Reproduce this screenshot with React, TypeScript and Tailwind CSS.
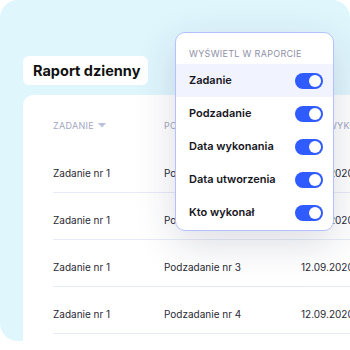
import React from "react";

const rows = [
  { task: "Zadanie nr 1", sub: "Podzadanie nr 1", date: "12.09.2020" },
  { task: "Zadanie nr 1", sub: "Podzadanie nr 2", date: "12.09.2020" },
  { task: "Zadanie nr 1", sub: "Podzadanie nr 3", date: "12.09.2020" },
  { task: "Zadanie nr 1", sub: "Podzadanie nr 4", date: "12.09.2020" },
];

const options = ["Zadanie", "Podzadanie", "Data wykonania", "Data utworzenia", "Kto wykonał"];

const Toggle = () => (
  <div className="w-[28px] h-[16px] rounded-full bg-[#2f5bff] flex items-center justify-end pr-[2px]">
    <div className="w-[12px] h-[12px] rounded-full bg-white" />
  </div>
);

const App = () => {
  return (
    <div
      className="w-[350px] h-[350px] bg-white relative overflow-hidden"
      style={{ fontFamily: "Inter, 'Noto Sans', sans-serif" }}
    >
      <div className="w-[350px] h-[341px] rounded-[18px] bg-[#e0f6fd] pt-[56px] pl-[23px]">
        <div className="w-[125px] h-[29px] rounded-[6px] bg-white flex items-center pl-[10px] text-[14.5px] font-bold text-[#111]">
          Raport dzienny
        </div>
        <div className="mt-[10px] h-[270px] w-[340px] bg-white rounded-tl-[10px] text-[10px] text-[#2a2a35]">
          <div className="h-[51px] pt-[10px] pl-[30px] flex items-center text-[9px] tracking-[0.3px] text-[#a3a6bf] whitespace-nowrap">
            <div className="w-[111px] shrink-0 flex items-center gap-[4px]">
              ZADANIE
              <svg width="8" height="5" viewBox="0 0 8 5">
                <path d="M0 0h8L4 4.5z" fill="#b9c0de" />
              </svg>
            </div>
            <div className="w-[137px] shrink-0">PODZADANIE</div>
            <div className="shrink-0">DATA WYKONANIA</div>
          </div>
          {rows.map((r, i) => (
            <div key={i} className="ml-[30px] h-[47px] pt-[8px] border-b border-[#e7ebf7] flex items-center whitespace-nowrap">
              <div className="w-[111px] shrink-0">{r.task}</div>
              <div className="w-[137px] shrink-0">{r.sub}</div>
              <div className="shrink-0">{r.date}</div>
            </div>
          ))}
        </div>
      </div>

      <div className="absolute left-[175px] top-[32px] w-[159px] h-[199px] bg-white rounded-[10px] border border-[#b3c2ff] shadow-[0_12px_40px_rgba(30,40,80,0.16)] overflow-hidden">
        <div className="h-[31px] pl-[13px] pt-[14px] text-[9px] tracking-[0.3px] text-[#8f90a8]">
          WYŚWIETL W RAPORCIE
        </div>
        {options.map((o, i) => (
          <div
            key={o}
            className={
              "h-[33px] pl-[13px] pr-[10px] flex items-center justify-between text-[11px] font-semibold text-[#16161d] " +
              (i === 0 ? "bg-[#f1f4ff]" : "")
            }
          >
            {o}
            <Toggle />
          </div>
        ))}
      </div>
    </div>
  );
};

export default App;
